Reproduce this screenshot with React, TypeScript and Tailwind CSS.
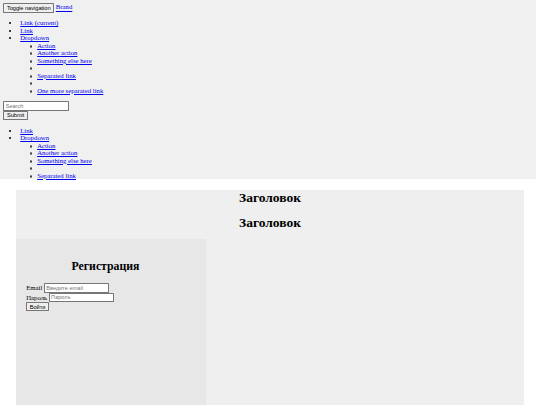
import React from 'react';

const btn =
  "font-['Liberation_Sans',Arial,sans-serif] text-[13.33px] leading-[15px] bg-[#efefef] border border-[#767676] rounded-[2px] px-[6px] py-[1px] text-black align-baseline";
const field =
  "font-['Liberation_Sans',Arial,sans-serif] text-[13.33px] leading-[15px] bg-white border border-[#767676] rounded-[2px] px-[3px] py-[2px] w-[155px] placeholder:text-[#757575]";
const link = 'text-[#0000ee] underline';

function SubMenu({ items }: { items: (string | null)[] }) {
  return (
    <ul className="pl-10">
      {items.map((it, i) => (
        <li
          key={i}
          className="relative h-[17.8px] before:content-[''] before:absolute before:-left-[18px] before:top-[7px] before:w-[7px] before:h-[7px] before:rounded-full before:border before:border-[#444]"
        >
          {it ? <a href="#" className={link}>{it}</a> : null}
        </li>
      ))}
    </ul>
  );
}

export default function App() {
  return (
    <div className="w-[1280px] h-[960px] overflow-hidden bg-white [zoom:0.421875] font-['Liberation_Serif','Times_New_Roman',serif] text-[16px] leading-[17.8px] text-black">
      {/* navbar, unstyled bootstrap markup */}
      <nav className="w-[1270px] bg-[#f0f0f0] pt-2 px-2">
        <div>
          <button className={btn}>Toggle navigation</button>{' '}
          <a href="#" className={link}>Brand</a>
        </div>
        <ul className="[list-style-type:disc] pl-10 my-4">
          <li><a href="#" className={link}>Link (current)</a></li>
          <li><a href="#" className={link}>Link</a></li>
          <li>
            <a href="#" className={link}>Dropdown</a>
            <SubMenu items={['Action', 'Another action', 'Something else here', null, 'Separated link', null, 'One more separated link']} />
          </li>
        </ul>
        <form>
          <div>
            <input className={field} placeholder="Search" />
          </div>
          <button className={btn}>Submit</button>
        </form>
        <ul className="[list-style-type:disc] pl-10 mt-4">
          <li><a href="#" className={link}>Link</a></li>
          <li>
            <a href="#" className={link}>Dropdown</a>
            <SubMenu items={['Action', 'Another action', 'Something else here', null, 'Separated link']} />
          </li>
        </ul>
      </nav>

      <div className="w-[1204px] mx-auto mt-[26px] bg-[#efefef] min-h-[600px]">
        <h1 className="text-[32px] font-bold text-center leading-[37px]">Заголовок</h1>
        <h1 className="text-[32px] font-bold text-center leading-[37px] mt-[21.44px] mb-[21.44px]">Заголовок</h1>
        <div className="flex">
          <aside className="w-[450px] min-h-[500px] bg-[#e7e7e7] pl-6 pr-[50px] pt-[25px]">
            <h2 className="text-[28px] font-bold text-center leading-[32px] my-[23px]">Регистрация</h2>
            <form>
              <div>
                <label>Email</label>{' '}
                <input className={field} placeholder="Введите email" />
              </div>
              <div>
                <label>Пароль</label>{' '}
                <input className={field} placeholder="Пароль" />
              </div>
              <button className={btn}>Войти</button>
            </form>
          </aside>
        </div>
      </div>
    </div>
  );
}
